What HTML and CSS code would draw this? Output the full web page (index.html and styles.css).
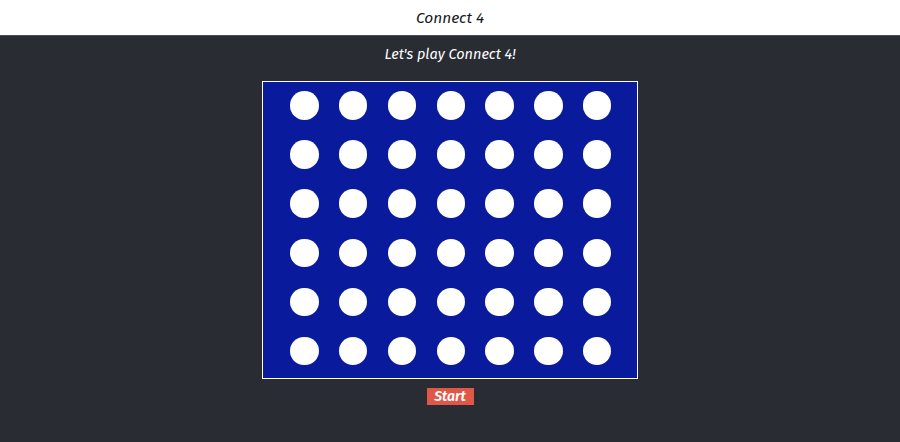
FILE: index.html
```html
<!DOCTYPE html>
<html>
<head>
<meta charset="utf-8">
<link rel="stylesheet" href="styles.css">
</head>
<body>
<header class="topbar"><h1 class="title">Connect 4</h1></header>
<main class="main">
  <p class="subtitle">Let's play Connect 4!</p>
  <div class="board" id="board"></div>
  <button class="start">Start</button>
</main>
<script>
  var b = document.getElementById('board');
  for (var i = 0; i < 42; i++) {
    var c = document.createElement('div');
    c.className = 'cell';
    b.appendChild(c);
  }
</script>
</body>
</html>
```

FILE: styles.css
```css
html, body {
  margin: 0;
  padding: 0;
  height: 100%;
}
body {
  background: #2a2c34;
  font-family: "Fira Sans", "Lato", "Open Sans", sans-serif;
}
.topbar {
  background: #ffffff;
  height: 36px;
  display: flex;
  align-items: center;
  justify-content: center;
  border-bottom: 1px solid #4a4c54;
  box-sizing: border-box;
}
.title {
  margin: 0;
  font-size: 15.5px;
  font-style: italic;
  font-weight: 400;
  color: #15161a;
}
.main {
  display: flex;
  flex-direction: column;
  align-items: center;
}
.subtitle {
  margin: 8px 0 0;
  height: 20px;
  line-height: 20px;
  font-size: 14.5px;
  font-style: italic;
  font-weight: 400;
  color: #ffffff;
}
.board {
  margin-top: 17px;
  border: 1px solid #ffffff;
  background: #0a1a9c;
  display: grid;
  grid-template-columns: repeat(7, 28.5px);
  grid-auto-rows: 28.5px;
  column-gap: 20.3px;
  row-gap: 20.7px;
  padding: 9px 25.5px 13px 27px;
}
.cell {
  background: #ffffff;
  border-radius: 50%;
}
.start {
  margin-top: 9px;
  width: 47px;
  height: 17px;
  padding: 0;
  border: none;
  background: #e05647;
  color: #ffffff;
  font-family: "Fira Sans", "Lato", "Open Sans", sans-serif;
  font-style: italic;
  font-weight: 600;
  font-size: 14px;
  line-height: 17px;
}
```
